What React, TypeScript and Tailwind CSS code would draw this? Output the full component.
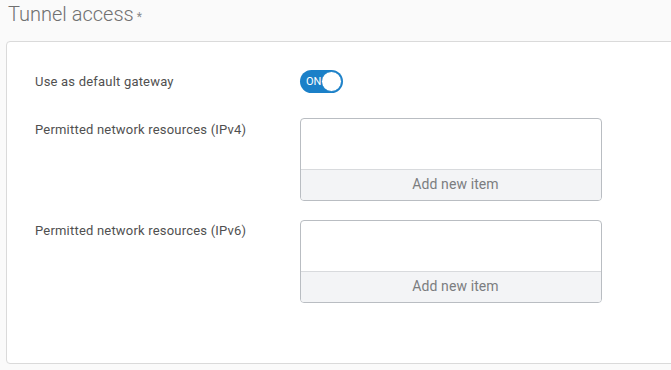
import React, { useState } from 'react';

function Toggle({ on, onChange }: { on: boolean; onChange: () => void }) {
  return (
    <button
      onClick={onChange}
      className="relative w-[43px] h-[23px] rounded-full bg-[#1b80c8] flex items-center pl-[6px]"
    >
      <span className="text-white text-[11px] leading-none">{on ? 'ON' : 'OFF'}</span>
      <span className="absolute right-[1px] top-[1px] w-[21px] h-[21px] rounded-full bg-white border-[1.5px] border-[#1b80c8]" />
    </button>
  );
}

function ItemList() {
  return (
    <div className="w-[302px] h-[83px] border border-[#b9bdc2] rounded-[4px] overflow-hidden flex flex-col bg-white">
      <div className="flex-1" />
      <button className="h-[31px] pl-[9px] pb-[1px] border-t border-[#d8dadd] bg-[#f3f4f6] text-[14px] tracking-[0.1px] text-[#7b7d80]">
        Add new item
      </button>
    </div>
  );
}

export default function App() {
  const [gateway, setGateway] = useState(true);

  return (
    <div
      className="w-[671px] h-[370px] overflow-hidden bg-[#fafafa] text-[#505050]"
      style={{ fontFamily: 'Roboto, "Liberation Sans", sans-serif' }}
    >
      <div className="pl-[8px] pt-[1px] h-[41px] flex items-start">
        <h1 className="text-[20px] font-light text-[#707070] leading-[26px]">Tunnel access</h1>
        <span className="text-[12px] text-[#8a8a8a] ml-[3px] mt-[7px]">*</span>
      </div>

      {/* Card */}
      <div className="ml-[6px] w-[700px] h-[323px] bg-white border border-[#dadada] rounded-[4px] pt-[28px] pl-[28px] flex flex-col">
        <div className="flex items-center">
          <div className="w-[265px] text-[13px] tracking-[0.2px] leading-4">Use as default gateway</div>
          <Toggle on={gateway} onChange={() => setGateway(!gateway)} />
        </div>

        <div className="flex items-start mt-[25px]">
          <div className="w-[265px] text-[13px] tracking-[0.2px] leading-4 mt-[4px]">Permitted network resources (IPv4)</div>
          <ItemList />
        </div>

        <div className="flex items-start mt-[19px]">
          <div className="w-[265px] text-[13px] tracking-[0.2px] leading-4 mt-[3px]">Permitted network resources (IPv6)</div>
          <ItemList />
        </div>
      </div>
    </div>
  );
}
